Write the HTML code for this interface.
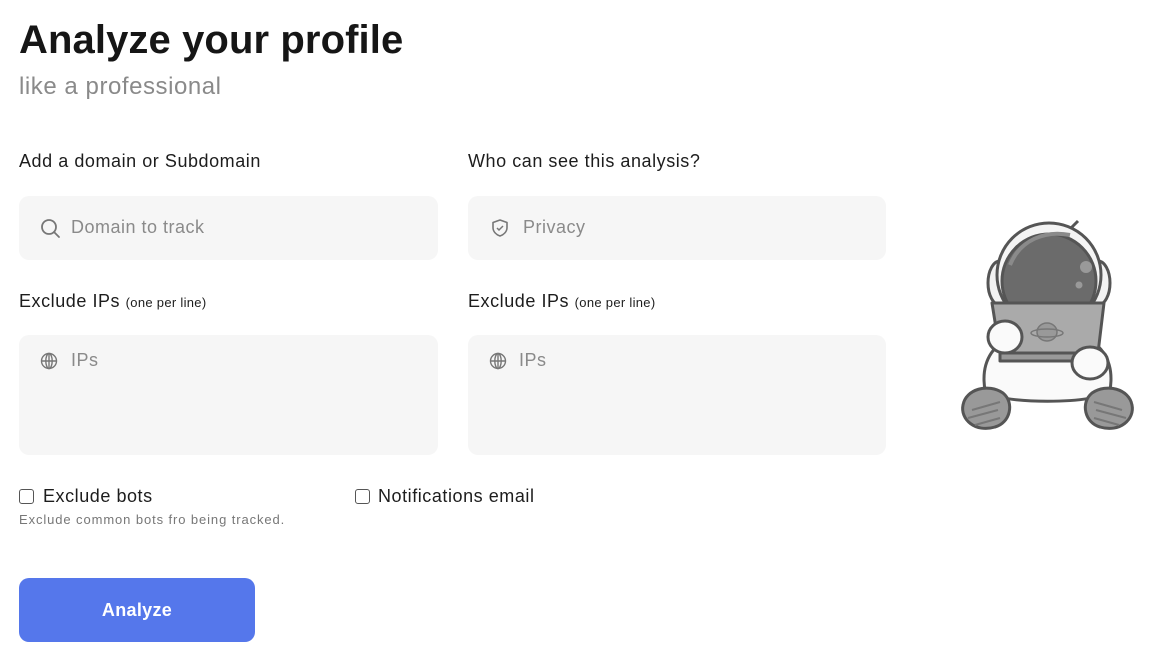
<!DOCTYPE html>
<html><head><style>
*{box-sizing:border-box;margin:0;padding:0}
body{width:1160px;height:668px;background:#fff;font-family:"Liberation Sans",sans-serif;color:#1a1a1a;position:relative;overflow:hidden}
.a{position:absolute}
h1{position:absolute;left:19px;top:18px;font-size:40px;font-weight:700;letter-spacing:0.1px;color:#161616}
.sub{left:19px;top:73px;font-size:24px;color:#8a8a8a;letter-spacing:0.55px}
.lbl{font-size:18px;color:#1d1d1d;letter-spacing:0.55px}
.lbl small{font-size:13px;letter-spacing:0.3px}
.box{background:#f6f6f6;border-radius:10px}
.ph{font-size:18px;color:#8a8a8a;letter-spacing:0.5px}
.cb{width:15px;height:15px;border:1.5px solid #555;border-radius:3px;background:#fff}
.btn{left:19px;top:578px;width:236px;height:64px;background:#5577eb;border-radius:10px;color:#fff;font-size:18px;font-weight:700;text-align:center;line-height:64px;letter-spacing:0.3px}
</style></head><body>
<h1>Analyze your profile</h1>
<div class="a sub">like a professional</div>

<div class="a lbl" style="left:19px;top:151px">Add a domain or Subdomain</div>
<div class="a lbl" style="left:468px;top:151px">Who can see this analysis?</div>

<div class="a box" style="left:19px;top:196px;width:419px;height:64px"></div>
<svg class="a" style="left:40px;top:218px" width="21" height="21" viewBox="0 0 21 21"><circle cx="9" cy="9" r="7" fill="none" stroke="#777" stroke-width="1.8"/><path d="M14 14l5 5" stroke="#777" stroke-width="1.8" stroke-linecap="round"/></svg>
<div class="a ph" style="left:71px;top:217px">Domain to track</div>

<div class="a box" style="left:468px;top:196px;width:418px;height:64px"></div>
<svg class="a" style="left:490px;top:218px" width="20" height="20" viewBox="0 0 20 20"><path d="M10 2l7 2.5v5c0 4-3 7-7 8.5C6 16.5 3 13.5 3 9.5v-5z" fill="none" stroke="#777" stroke-width="1.6" stroke-linejoin="round"/><path d="M7 10l2 2 4-4" fill="none" stroke="#777" stroke-width="1.5"/></svg>
<div class="a ph" style="left:523px;top:217px">Privacy</div>

<div class="a lbl" style="left:19px;top:291px">Exclude IPs <small>(one per line)</small></div>
<div class="a lbl" style="left:468px;top:291px">Exclude IPs <small>(one per line)</small></div>

<div class="a box" style="left:19px;top:335px;width:419px;height:120px"></div>
<div class="a box" style="left:468px;top:335px;width:418px;height:120px"></div>
<svg class="a" style="left:40px;top:352px" width="18" height="18" viewBox="0 0 18 18"><g fill="none" stroke="#777" stroke-width="1.4"><circle cx="9" cy="9" r="7.5"/><ellipse cx="9" cy="9" rx="3.2" ry="7.5"/><path d="M1.5 9h15M9 1.5v15"/></g></svg>
<div class="a ph" style="left:71px;top:350px">IPs</div>
<svg class="a" style="left:489px;top:352px" width="18" height="18" viewBox="0 0 18 18"><g fill="none" stroke="#777" stroke-width="1.4"><circle cx="9" cy="9" r="7.5"/><ellipse cx="9" cy="9" rx="3.2" ry="7.5"/><path d="M1.5 9h15M9 1.5v15"/></g></svg>
<div class="a ph" style="left:519px;top:350px">IPs</div>

<div class="a cb" style="left:19px;top:489px"></div>
<div class="a lbl" style="left:43px;top:486px">Exclude bots</div>
<div class="a" style="left:19px;top:512px;font-size:13px;color:#777;letter-spacing:0.9px">Exclude common bots fro being tracked.</div>
<div class="a cb" style="left:355px;top:489px"></div>
<div class="a lbl" style="left:378px;top:486px">Notifications email</div>

<div class="a btn">Analyze</div>

<svg class="a" style="left:950px;top:215px" width="190" height="225" viewBox="0 0 190 225">
<g stroke="#555" stroke-width="3" stroke-linejoin="round">
<path d="M120 14l8-8" fill="none"/>
<ellipse cx="50" cy="68" rx="12" ry="22" fill="#f2f2f2"/>
<ellipse cx="148" cy="68" rx="12" ry="22" fill="#f2f2f2"/>
<circle cx="99" cy="60" r="52" fill="#f4f4f4"/>
<circle cx="99" cy="66" r="47" fill="#6b6b6b"/>
<path d="M35 175c-5-30 10-50 35-55h55c25 5 40 25 35 55-5 15-120 15-125 0z" fill="#fafafa"/>
<path d="M13 190c3-16 25-22 40-12 12 10 7 30-8 34-20 6-35-8-32-22z" fill="#999"/>
<path d="M182 190c-3-16-25-22-40-12-12 10-7 30 8 34 20 6 35-8 32-22z" fill="#999"/>
<path d="M42 88h112l-6 50H50z" fill="#aaa"/>
<path d="M50 138h98v8H50z" fill="#999"/>
<ellipse cx="55" cy="122" rx="17" ry="16" fill="#fafafa"/>
<ellipse cx="140" cy="148" rx="18" ry="16" fill="#fafafa"/>
</g>
<g stroke="#777" stroke-width="2" fill="none"><path d="M22 195l28-8M18 203l30-8M25 210l25-7"/><path d="M172 195l-28-8M176 203l-30-8M169 210l-25-7"/></g>
<path d="M60 50c10-25 35-35 60-30" stroke="#8a8a8a" stroke-width="4" fill="none"/>
<circle cx="136" cy="52" r="6" fill="#999"/><circle cx="129" cy="70" r="3.5" fill="#999"/>
<ellipse cx="97" cy="117" rx="10" ry="9" fill="#999" stroke="#777" stroke-width="1.5"/>
<ellipse cx="97" cy="118" rx="16" ry="4" fill="none" stroke="#777" stroke-width="1.5"/>
</svg>
</body></html>
